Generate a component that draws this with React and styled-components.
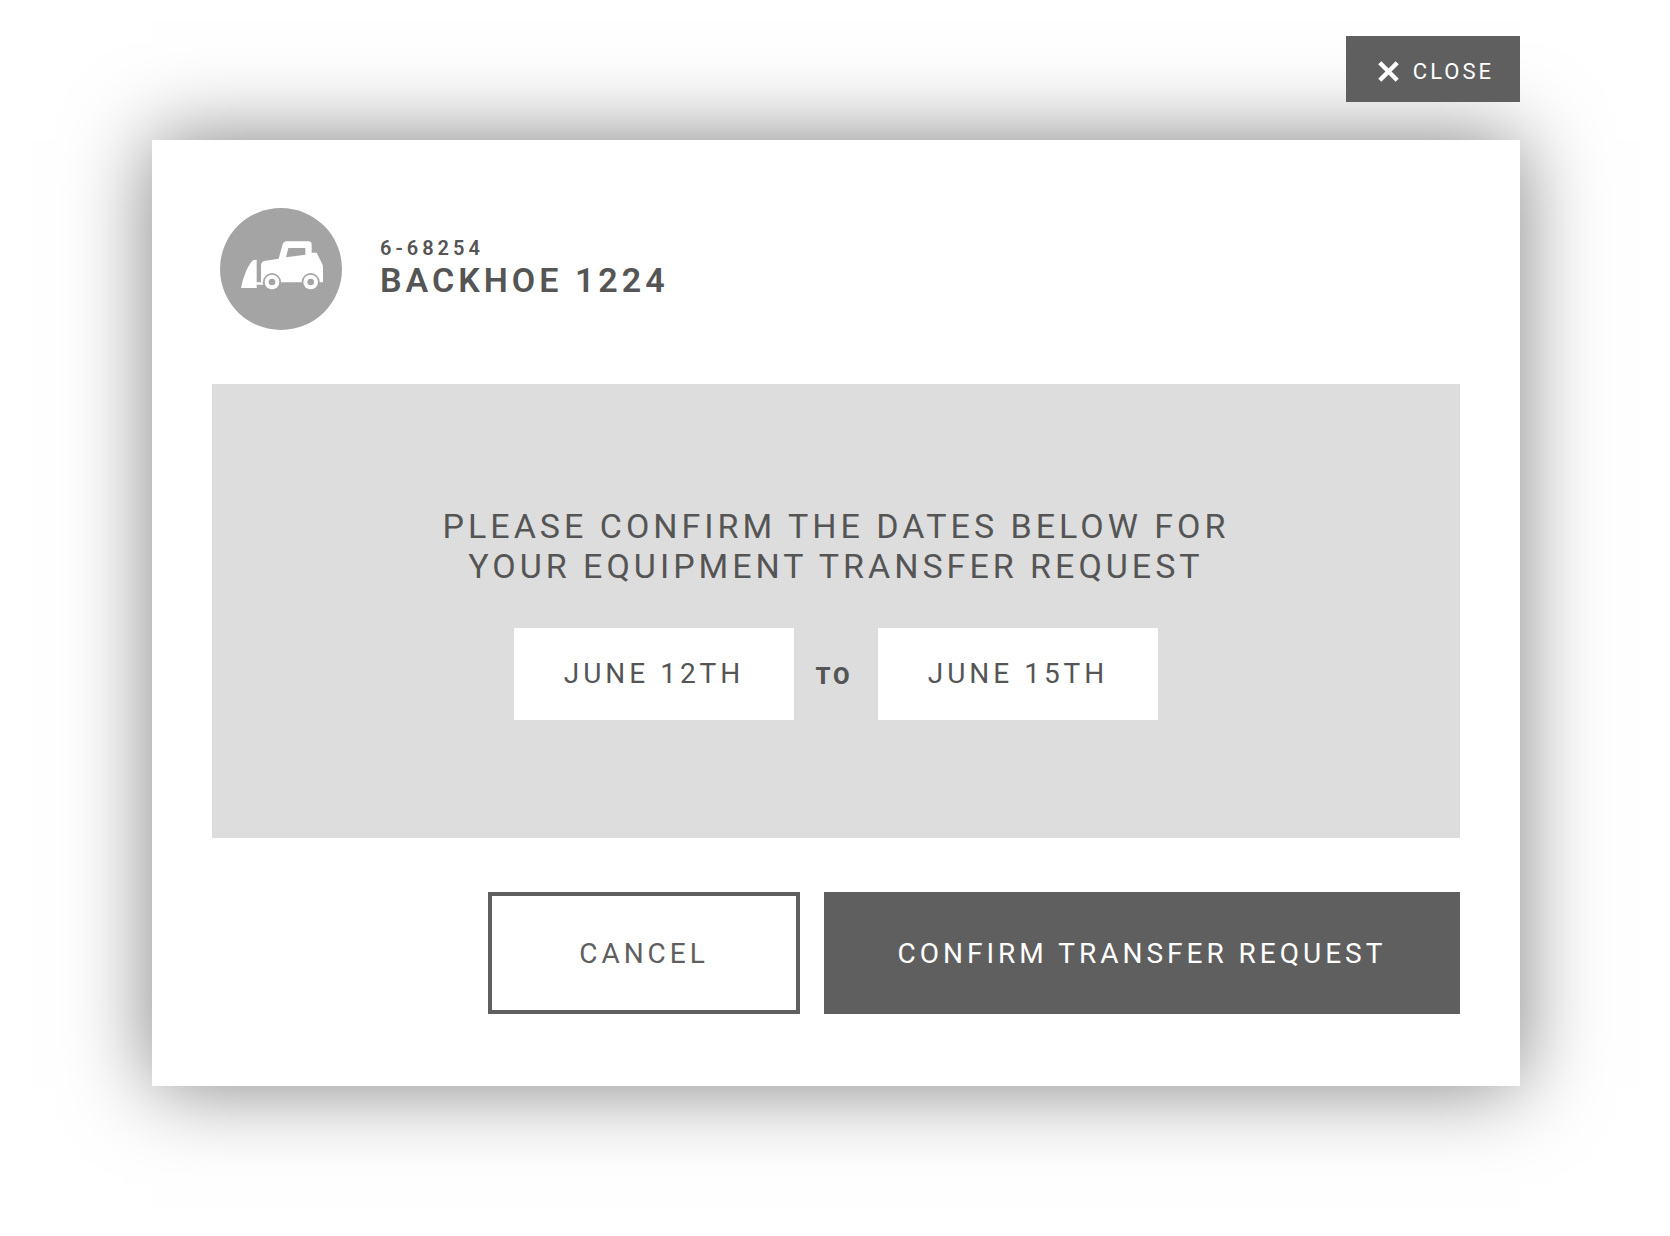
import React from "react";
import styled, { createGlobalStyle, css } from "styled-components";

const GlobalStyle = createGlobalStyle`
  *, *::before, *::after { box-sizing: border-box; }
  body { margin: 0; background: #fff; }
  button, input { font: inherit; letter-spacing: inherit; }
`;

const Page = styled.div`
  display: flex;
  flex-direction: column;
  gap: 38px;
  padding: 36px 150px 150px 152px;
  color: #555;
  font-family: Roboto, "Liberation Sans", sans-serif;
  letter-spacing: 4px;
  text-transform: uppercase;
`;

const CloseButton = styled.button`
  position: relative;
  z-index: 1;
  display: flex;
  align-items: center;
  align-self: flex-end;
  justify-content: space-between;
  width: 174px;
  height: 66px;
  padding: 4px 26px 0 32px;
  border: 0;
  background: #5f5f5f;
  color: #fff;
  font-size: 22px;
  letter-spacing: 3px;
  text-transform: inherit;
  cursor: pointer;
`;

const Card = styled.section`
  display: flex;
  flex-direction: column;
  gap: 54px;
  padding: 68px 60px 72px;
  background: #fff;
  box-shadow: 0 0 80px rgba(0, 0, 0, 0.5);
`;

const Header = styled.header`
  display: flex;
  align-items: center;
  gap: 38px;
  padding-left: 8px;
`;

const Badge = styled.svg`
  flex: none;
  width: 122px;
  height: 122px;
`;

const Equipment = styled.div`
  padding-bottom: 2px;
`;

const Unit = styled.p`
  margin: 0;
  font-size: 20px;
  font-weight: 600;
  line-height: 24px;
`;

const Title = styled.h1`
  margin: 0;
  font-size: 34px;
  font-weight: 600;
  line-height: 40px;
`;

const Panel = styled.div`
  display: flex;
  flex-direction: column;
  align-items: center;
  gap: 42px;
  padding: 122px 40px 118px;
  background: #ddd;
`;

const Prompt = styled.h2`
  max-width: 860px;
  margin: 0;
  font-size: 34px;
  font-weight: 400;
  line-height: 40px;
  text-align: center;
`;

const Dates = styled.div`
  display: flex;
  align-items: center;
`;

const DateField = styled.input`
  width: 280px;
  height: 92px;
  padding: 0 0 2px;
  border: 0;
  background: #fff;
  color: inherit;
  font-size: 28px;
  text-align: center;
  text-transform: inherit;
`;

const To = styled.span`
  width: 84px;
  padding: 4px 4px 0 0;
  font-size: 24px;
  font-weight: 800;
  letter-spacing: 3px;
  text-align: center;
`;

const Actions = styled.footer`
  display: flex;
  justify-content: flex-end;
  gap: 24px;
`;

const ActionButton = styled.button`
  width: ${(p) => (p.$primary ? 636 : 312)}px;
  height: 122px;
  padding: 0;
  border: 4px solid #5f5f5f;
  background: #fff;
  color: #5f5f5f;
  font-size: 28px;
  text-transform: inherit;
  cursor: pointer;
  ${(p) =>
    p.$primary &&
    css`
      background: #5f5f5f;
      color: #fff;
    `}
`;

const CloseIcon = () => (
  <svg width="21" height="21" viewBox="0 0 21 21" aria-hidden="true">
    <path d="M1.8 1.8 19.2 19.2M19.2 1.8 1.8 19.2" stroke="currentColor" strokeWidth="4.4" />
  </svg>
);

const BackhoeBadge = () => (
  <Badge viewBox="15 9 366 366" aria-hidden="true">
    <circle cx="198" cy="192" r="183" fill="#a4a4a4" />
    <path
      fill="#fff"
      d="M78 249C83 222 96 184 112 167Q115 164 125 164V249Z"
    />
    <path
      fill="#fff"
      fillRule="evenodd"
      d="M138 228V182Q138 169 151 167L191 161L203 118Q206 109 215 109H280Q290 109 290 119V143H305L324 182V232H138ZM220 129L213 157L271 149V129Z"
    />
    {[171, 287].map((x) => (
      <g key={x}>
        <circle cx={x} cy="231" r="27" fill="#a4a4a4" />
        <circle cx={x} cy="231" r="22" fill="#fff" />
        <circle cx={x} cy="231" r="10" fill="#a4a4a4" />
      </g>
    ))}
    <path d="M124 232H143L145 239H124Z" fill="#fff" />
  </Badge>
);

export default function App() {
  return (
    <>
      <GlobalStyle />
      <Page>
        <CloseButton type="button">
          <CloseIcon />
          Close
        </CloseButton>
        <Card>
          <Header>
            <BackhoeBadge />
            <Equipment>
              <Unit>6-68254</Unit>
              <Title>Backhoe 1224</Title>
            </Equipment>
          </Header>
          <Panel>
            <Prompt>Please confirm the dates below for your equipment transfer request</Prompt>
            <Dates>
              <DateField aria-label="Start date" defaultValue="June 12th" />
              <To>to</To>
              <DateField aria-label="End date" defaultValue="June 15th" />
            </Dates>
          </Panel>
          <Actions>
            <ActionButton type="button">Cancel</ActionButton>
            <ActionButton type="button" $primary>
              Confirm transfer request
            </ActionButton>
          </Actions>
        </Card>
      </Page>
    </>
  );
}
